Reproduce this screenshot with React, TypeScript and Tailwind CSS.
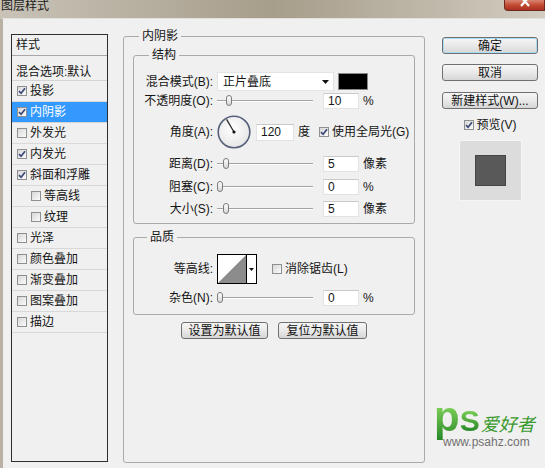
import type { ReactNode } from 'react';

// Photoshop "图层样式" dialog, inner shadow page

const effects = [
  { name: '投影', on: true },
  { name: '内阴影', on: true, active: true },
  { name: '外发光' },
  { name: '内发光', on: true },
  { name: '斜面和浮雕', on: true },
  { name: '等高线', sub: true },
  { name: '纹理', sub: true },
  { name: '光泽' },
  { name: '颜色叠加' },
  { name: '渐变叠加' },
  { name: '图案叠加' },
  { name: '描边' },
];

function Check({ on }: { on?: boolean }) {
  return (
    <span className="flex h-[10px] w-[10px] shrink-0 items-center justify-center border border-[#8e8f8f] bg-gradient-to-br from-[#d8d8d8] to-[#fbfbfb]">
      {on && (
        <svg width="8" height="8" viewBox="0 0 8 8">
          <path d="M1 4.2 L3.1 6.3 L7 1.3" fill="none" stroke="#3b4a78" strokeWidth="1.7" />
        </svg>
      )}
    </span>
  );
}

function Label({ children }: { children: ReactNode }) {
  return <div className="w-[79px] shrink-0 text-right text-[12px] leading-[14px]">{children}</div>;
}

function Slider({ at }: { at: number }) {
  return (
    <div className="relative ml-[4px] flex h-[16px] w-[96px] shrink-0 items-center">
      <div className="h-[2px] w-full border-t border-b border-t-[#a2a2a2] border-b-white" />
      <div
        className="absolute top-[2px] h-[11px] w-[6px] rounded-[3px] border border-[#7b7b7b] bg-gradient-to-b from-white to-[#d6d6d6]"
        style={{ left: at }}
      />
    </div>
  );
}

function NumBox({ v }: { v: string }) {
  return (
    <div className="ml-[10px] flex h-[16px] w-[36px] shrink-0 items-center border border-[#e2e2e2] border-t-[#c9c9c9] bg-white pl-[4px] text-[12px] leading-none">
      {v}
    </div>
  );
}

function SliderRow({ label, at, v, unit, className }: { label: string; at: number; v: string; unit: string; className: string }) {
  return (
    <div className={`flex h-[16px] items-center ${className}`}>
      <Label>{label}</Label>
      <Slider at={at} />
      <NumBox v={v} />
      <span className="ml-[4px] text-[12px] leading-none">{unit}</span>
    </div>
  );
}

function Btn({ children, className }: { children: ReactNode; className: string }) {
  return (
    <button
      className={`flex h-[17px] items-center justify-center rounded-[3px] border border-[#707070] bg-gradient-to-b from-[#f6f6f6] via-[#e9e9e9] to-[#d6d6d6] text-[12px] leading-none text-[#111] ${className}`}
    >
      {children}
    </button>
  );
}

export default function App() {
  return (
    <div className="flex h-[468px] w-[545px] flex-col overflow-hidden bg-[#f0f0f0] font-['Liberation_Sans','Noto_Sans_CJK_SC',sans-serif] text-[#151515]">
      {/* title bar */}
      <div className="flex h-[18px] shrink-0 items-start bg-gradient-to-r from-[#c9c3b8] via-[#a69d8a] to-[#d2ccc1]">
        <span className="pl-[1px] text-[12px] leading-[13px] text-[#1b1b1b]">图层样式</span>
        <div className="ml-auto flex h-[11px] w-[41px] items-start justify-center rounded-bl-[4px] border border-t-0 border-[#6e2a1f] bg-gradient-to-b from-[#d88572] via-[#c24a34] to-[#a9311f]">
          <svg width="12" height="7" viewBox="0 0 12 7">
            <path d="M2 -3 L10 6 M10 -3 L2 6" stroke="white" strokeWidth="2.2" />
          </svg>
        </div>
      </div>

      <div className="flex flex-1 border-t border-l-[3px] border-t-[#e4e1dc] border-l-[#b9b2a4]">
        {/* left: style list */}
        <div className="mt-[15px] ml-[8px] h-[428px] w-[97px] shrink-0 border border-[#2e2e2e] bg-[#f0f0f0]">
          <div className="flex h-[21px] items-center border-b border-[#a8a8a8] pl-[4px] text-[12px]">样式</div>
          <div className="flex h-[25px] items-center border-b border-[#d4d4d4] pt-[7px] pl-[4px] text-[12px]">混合选项:默认</div>
          {effects.map((e) => (
            <div
              key={e.name}
              className={`flex h-[21px] items-center border-b text-[12px] ${e.active ? 'border-[#d4d4d4] bg-[#3399ff] text-white' : 'border-[#d9d9d9]'} ${e.sub ? 'pl-[19px]' : 'pl-[5px]'}`}
            >
              <Check on={e.on} />
              <span className="ml-[3px]">{e.name}</span>
            </div>
          ))}
        </div>

        {/* middle: inner shadow settings */}
        <fieldset className="mt-[10px] ml-[15px] h-[434px] w-[302px] shrink-0 rounded-[3px] border border-[#aaaaaa]">
          <legend className="ml-[15px] px-[3px] text-[12px] leading-[14px]">内阴影</legend>

          <fieldset className="mx-[9px] mt-[5px] rounded-[3px] border border-[#aaaaaa] pb-[6px]">
            <legend className="ml-[15px] px-[3px] text-[12px] leading-[14px]">结构</legend>

            <div className="mt-[10px] flex h-[19px] items-center">
              <Label>混合模式(B):</Label>
              <div className="ml-[4px] flex h-[19px] w-[117px] items-center justify-between border border-[#e4e4e4] bg-white pr-[4px] pl-[5px] text-[12px]">
                <span>正片叠底</span>
                <svg width="7" height="4" viewBox="0 0 7 4">
                  <path d="M0 0 H7 L3.5 4 Z" fill="#111" />
                </svg>
              </div>
              <div className="ml-[4px] h-[17px] w-[30px] border border-[#8a8a8a] bg-black" />
            </div>

            <SliderRow label="不透明度(O):" at={9} v="10" unit="%" className="mt-[2px]" />

            <div className="mt-[6px] flex h-[34px] items-center">
              <Label>角度(A):</Label>
              <svg className="ml-[4px]" width="34" height="34" viewBox="0 0 34 34">
                <defs>
                  <radialGradient id="dial" cx="45%" cy="40%" r="60%">
                    <stop offset="0%" stopColor="#ffffff" />
                    <stop offset="100%" stopColor="#e6e6e6" />
                  </radialGradient>
                </defs>
                <circle cx="17" cy="17" r="15.8" fill="url(#dial)" stroke="#56607a" strokeWidth="1.6" />
                <line x1="17" y1="17" x2="9.6" y2="4.4" stroke="#2b2b2b" strokeWidth="1.3" />
                <circle cx="17" cy="17" r="1.6" fill="#111" />
              </svg>
              <div className="ml-[5px] flex h-[17px] w-[38px] items-center border border-[#e2e2e2] border-t-[#c9c9c9] bg-white pl-[4px] text-[12px] leading-none">
                120
              </div>
              <span className="ml-[4px] text-[12px] leading-none">度</span>
              <span className="ml-[9px]">
                <Check on />
              </span>
              <span className="ml-[3px] text-[12px] leading-none whitespace-nowrap">使用全局光(G)</span>
            </div>

            <SliderRow label="距离(D):" at={6} v="5" unit="像素" className="mt-[7px]" />
            <SliderRow label="阻塞(C):" at={0} v="0" unit="%" className="mt-[7px]" />
            <SliderRow label="大小(S):" at={6} v="5" unit="像素" className="mt-[6px]" />
          </fieldset>

          <fieldset className="mx-[9px] mt-[6px] rounded-[3px] border border-[#aaaaaa] pb-[8px]">
            <legend className="ml-[13px] px-[3px] text-[12px] leading-[14px]">品质</legend>

            <div className="mt-[10px] flex h-[30px] items-center">
              <Label>等高线:</Label>
              <div className="ml-[4px] flex h-[30px] w-[40px] border border-black bg-white">
                <svg width="28" height="28" viewBox="0 0 28 28">
                  <path d="M0 28 L28 0 L28 28 Z" fill="#8c8c8c" />
                </svg>
                <div className="flex flex-1 items-center justify-center border-l border-black">
                  <svg width="5" height="3" viewBox="0 0 5 3">
                    <path d="M0 0 H5 L2.5 3 Z" fill="#111" />
                  </svg>
                </div>
              </div>
              <span className="ml-[15px]">
                <Check />
              </span>
              <span className="ml-[3px] text-[12px] leading-none">消除锯齿(L)</span>
            </div>

            <SliderRow label="杂色(N):" at={0} v="0" unit="%" className="mt-[6px]" />
          </fieldset>

          <div className="mt-[7px] flex justify-center gap-[10px]">
            <Btn className="w-[87px]">设置为默认值</Btn>
            <Btn className="w-[89px]">复位为默认值</Btn>
          </div>
        </fieldset>

        {/* right: buttons, preview, logo */}
        <div className="mt-[18px] ml-[17px] flex w-[96px] flex-col items-center pb-[19px]">
          <Btn className="h-[16px] w-[96px] border-[#3c7fb1] shadow-[inset_0_0_0_1px_#a8dcf6]">确定</Btn>
          <Btn className="mt-[10px] h-[16px] w-[96px]">取消</Btn>
          <Btn className="mt-[11px] h-[16px] w-[96px]">新建样式(W)...</Btn>
          <div className="mt-[10px] flex h-[12px] items-center">
            <Check on />
            <span className="ml-[3px] text-[12px] leading-none">预览(V)</span>
          </div>
          <div className="mt-[9px] flex h-[61px] w-[63px] items-center justify-center border border-[#f6f6f6] bg-[#dcdcdc]">
            <div className="h-[31px] w-[31px] border border-[#454545] bg-[#595959]" />
          </div>

          {/* watermark logo */}
          <div className="mt-auto -ml-[8px] flex flex-col self-start">
            <div className="flex items-baseline">
              <span className="-mb-[14px] bg-gradient-to-b from-[#7fd35a] to-[#1d8224] bg-clip-text pb-[14px] text-[42px] leading-[24px] font-bold text-transparent">p</span>
              <span className="bg-gradient-to-b from-[#7fd35a] to-[#1d8224] bg-clip-text text-[30px] leading-[24px] font-bold text-transparent">S</span>
              <span className="ml-[1px] text-[18px] leading-[20px] text-[#3a9a2e] italic">爱好者</span>
            </div>
            <span className="mt-[1px] pl-[9px] text-[12px] leading-[13px] text-[#707070]">www.psahz.com</span>
          </div>
        </div>
      </div>
    </div>
  );
}
